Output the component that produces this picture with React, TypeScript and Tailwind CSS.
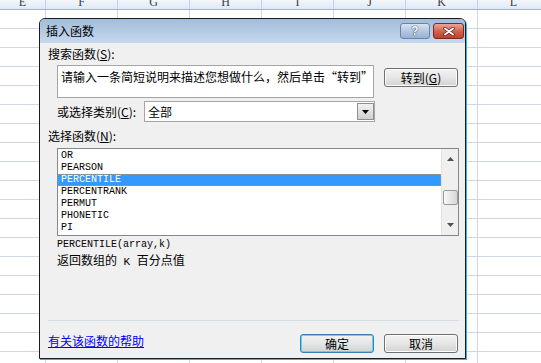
import React from 'react';

const cols = ['E', 'F', 'G', 'H', 'I', 'J', 'K', 'L'];
const widths = ['w-[46px]', 'w-[72px]', 'w-[72px]', 'w-[72px]', 'w-[72px]', 'w-[72px]', 'w-[72px]', 'w-[72px]'];
const items = ['OR', 'PEARSON', 'PERCENTILE', 'PERCENTRANK', 'PERMUT', 'PHONETIC', 'PI'];

const cjk = { fontFamily: '"Noto Sans CJK SC", "Liberation Sans", sans-serif' };
const mono = { fontFamily: '"Liberation Mono", "Noto Sans CJK SC", monospace' };

function Btn({ children, primary }: { children: React.ReactNode; primary?: boolean }) {
    return (
        <div
            className={
                'flex items-center justify-center w-[74px] h-[19px] rounded-[3px] border text-[12px] leading-none text-black bg-gradient-to-b from-[#f3f3f3] via-[#e6e6e6] to-[#d2d2d2] ' +
                (primary ? 'border-[#3c7fb1] shadow-[inset_0_0_0_1px_#5fd3f7]' : 'border-[#707070] shadow-[inset_0_0_0_1px_#fbfbfb]')
            }
        >
            {children}
        </div>
    );
}

export default function App() {
    return (
        <div className="relative w-[541px] h-[363px] overflow-hidden bg-white" style={cjk}>
            {/* sheet */}
            <div className="flex h-[10px] overflow-hidden border-b border-[#9eb6ce] bg-gradient-to-b from-[#f4f7fb] to-[#dfe8f4]">
                {cols.map((c, i) => (
                    <div key={c} className={'shrink-0 flex items-end justify-center border-r border-[#c3d2e6] ' + widths[i]}>
                        <span className="text-[12px] leading-none mb-[1px] text-[#3b3b3b]" style={{ fontFamily: '"Liberation Serif", serif' }}>{c}</span>
                    </div>
                ))}
            </div>
            {Array.from({ length: 19 }).map((_, r) => (
                <div key={r} className="flex h-[19px] border-b border-[#d0d7e5]">
                    {cols.map((c, i) => (
                        <div key={c} className={'shrink-0 border-r border-[#d0d7e5] ' + widths[i]} />
                    ))}
                </div>
            ))}

            {/* dialog */}
            <div className="absolute left-[39px] top-[18px] w-[427px] h-[341px] flex flex-col border border-[#1c1c1c] rounded-t-[6px] bg-[#f0f0f0] shadow-[1px_1px_0_0_#36b6e6]">
                <div className="flex items-start h-[24px] rounded-t-[5px] bg-gradient-to-b from-[#a2bcdb] to-[#c6d9ee]">
                    <span className="ml-[6px] mt-[5px] text-[12px] leading-[14px] text-black">插入函数</span>
                    <div className="ml-auto mt-[4px] mr-[1px] flex gap-[3px]">
                        <div className="flex items-center justify-center w-[30px] h-[16px] rounded-[3px] border border-[#6b84a6] bg-gradient-to-b from-[#d7e3f2] via-[#b3c8e2] to-[#97b1d3]">
                            <span className="text-[12px] leading-none font-bold text-white [text-shadow:0_0_1px_#1d2f4a,0_0_1px_#1d2f4a]" style={{ fontFamily: '"Liberation Sans", sans-serif' }}>?</span>
                        </div>
                        <div className="flex items-center justify-center w-[31px] h-[16px] rounded-[3px] border border-[#7b2a1f] bg-gradient-to-b from-[#eaa597] via-[#d2654f] to-[#c0402b]">
                            <svg width="12" height="9" viewBox="0 0 12 9">
                                <path d="M2 1.5 L10 7.5 M10 1.5 L2 7.5" stroke="#5a1a12" strokeWidth="3.4" strokeLinecap="round" />
                                <path d="M2 1.5 L10 7.5 M10 1.5 L2 7.5" stroke="#ffffff" strokeWidth="2" strokeLinecap="round" />
                            </svg>
                        </div>
                    </div>
                </div>

                <div className="flex flex-col pl-2 pr-[6px] text-[12px] text-black">
                    <div className="mt-[5px] h-[12px] leading-[12px]">搜索函数(<u>S</u>):</div>
                    <div className="mt-[5px] flex items-start">
                        <div className="ml-[9px] w-[317px] h-[33px] border border-[#a5a5a5] bg-white pl-[3px] pt-[5px] overflow-hidden whitespace-nowrap leading-[12px]">
                            请输入一条简短说明来描述您想做什么，然后单击“转到”
                        </div>
                        <div className="ml-[10px] mt-[3px]"><Btn>转到(<u>G</u>)</Btn></div>
                    </div>

                    <div className="mt-[3px] flex items-center">
                        <div className="ml-[9px] w-[87px] leading-[12px]">或选择类别(<u>C</u>):</div>
                        <div className="flex w-[231px] h-[21px] border border-[#a5a5a5] bg-white">
                            <span className="ml-[3px] self-center leading-[12px]">全部</span>
                            <div className="ml-auto mt-[1px] w-[17px] h-[17px] flex items-center justify-center border border-[#8e8f8f] bg-gradient-to-b from-[#f2f2f2] to-[#cfcfcf]">
                                <svg width="7" height="4" viewBox="0 0 7 4"><path d="M0 0 H7 L3.5 4 Z" fill="#000" /></svg>
                            </div>
                        </div>
                    </div>

                    <div className="mt-[8px] h-[12px] leading-[12px]">选择函数(<u>N</u>):</div>

                    <div className="ml-[9px] mt-[6px] w-[402px] h-[88px] flex border border-[#828790] bg-white">
                        <div className="flex-1 flex flex-col pt-[1px]" style={mono}>
                            {items.map((it) =>
                                it === 'PERCENTILE' ? (
                                    <div key={it} className="h-[12px] leading-[10px] text-[10px] pl-[2px] bg-[#3399ff] text-white border border-dotted border-[#d98a2b]">{it}</div>
                                ) : (
                                    <div key={it} className="h-[12px] leading-[12px] text-[10px] pl-[3px] text-black">{it}</div>
                                )
                            )}
                        </div>
                        <div className="w-[17px] flex flex-col items-center bg-[#efefef] border-l border-[#e4e4e4]">
                            <svg className="mt-[8px]" width="7" height="4" viewBox="0 0 7 4"><path d="M3.5 0 L7 4 H0 Z" fill="#505050" /></svg>
                            <div className="mt-[29px] w-[15px] h-[15px] rounded-[2px] border border-[#9a9a9a] bg-gradient-to-r from-[#f8f8f8] to-[#d6d6d6]" />
                            <svg className="mt-auto mb-[8px]" width="7" height="4" viewBox="0 0 7 4"><path d="M0 0 H7 L3.5 4 Z" fill="#505050" /></svg>
                        </div>
                    </div>

                    <div className="ml-[9px] mt-[3px] leading-[12px]">
                        <div className="text-[10px]" style={mono}>PERCENTILE(array,k)</div>
                        <div className="mt-[3px]">返回数组的<span className="text-[11px]" style={mono}> K </span>百分点值</div>
                    </div>

                    <div className="mt-[52px] h-[2px] border-t border-[#d5dce5] border-b-white" />

                    <div className="mt-[12px] flex items-start">
                        <a className="mt-[1px] leading-[12px] text-[#0000ff] underline">有关该函数的帮助</a>
                        <div className="ml-auto mr-[1px] flex gap-[10px]">
                            <Btn primary>确定</Btn>
                            <Btn>取消</Btn>
                        </div>
                    </div>
                </div>
            </div>
        </div>
    );
}
